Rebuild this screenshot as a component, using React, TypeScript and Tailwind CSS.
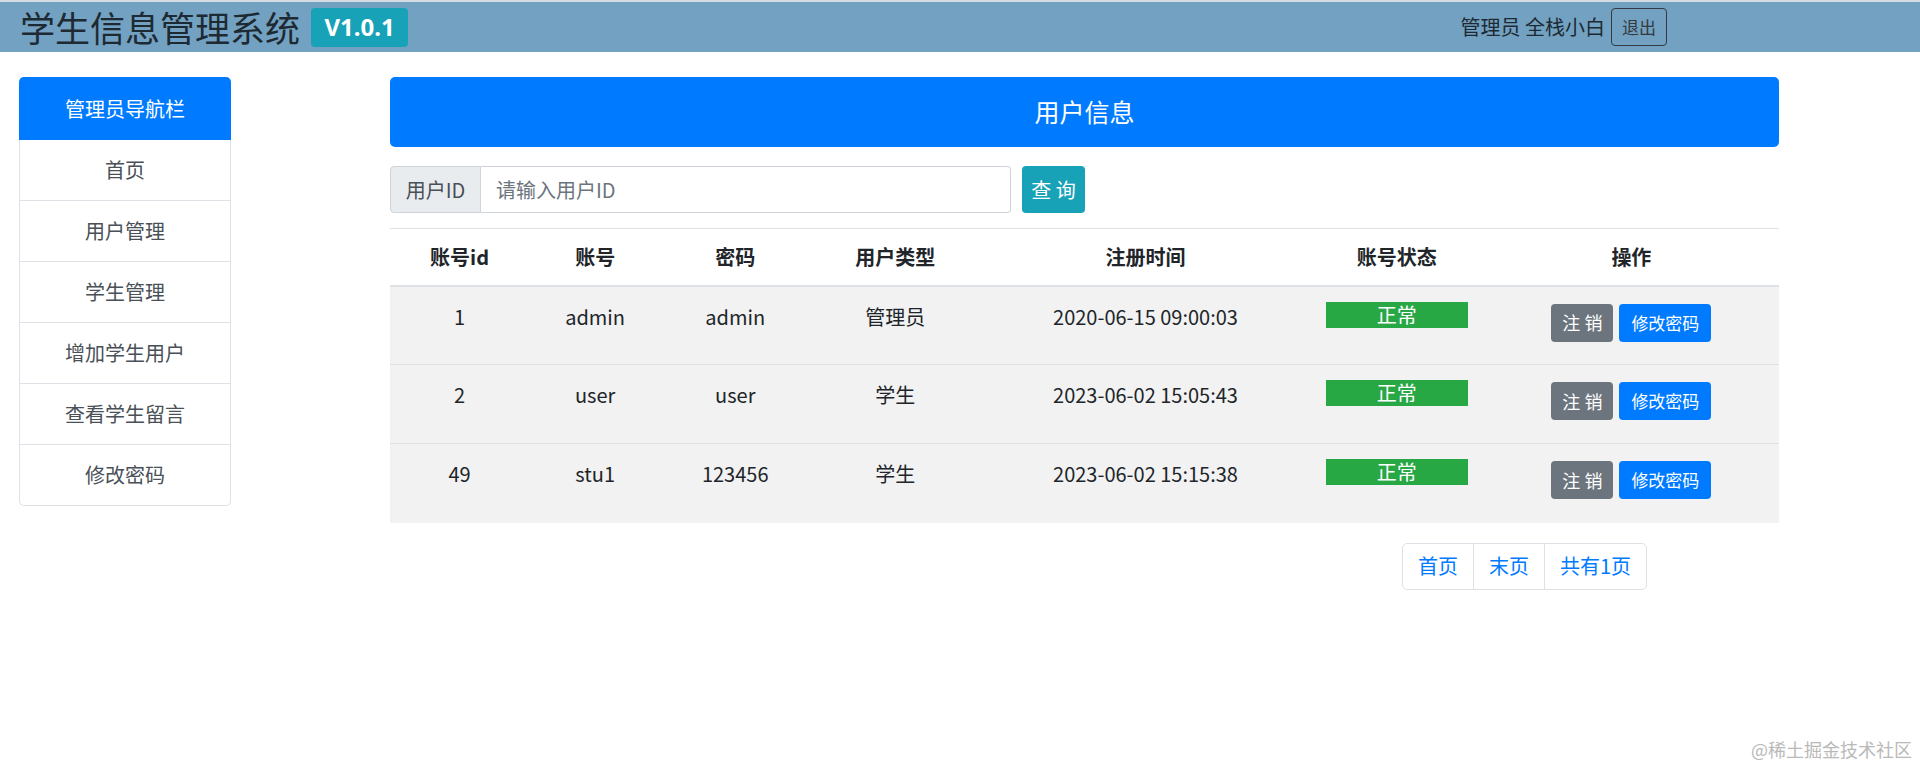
import React from "react";

// 侧边导航
const NAV_ITEMS = ["首页", "用户管理", "学生管理", "增加学生用户", "查看学生留言", "修改密码"];

const USERS = [
  { id: 1, account: "admin", pwd: "admin", type: "管理员", time: "2020-06-15 09:00:03" },
  { id: 2, account: "user", pwd: "user", type: "学生", time: "2023-06-02 15:05:43" },
  { id: 49, account: "stu1", pwd: "123456", type: "学生", time: "2023-06-02 15:15:38" },
];

const COLS = [
  { label: "账号id", w: "w-[139px]" },
  { label: "账号", w: "w-[132px]" },
  { label: "密码", w: "w-[148px]" },
  { label: "用户类型", w: "w-[172px]" },
  { label: "注册时间", w: "w-[328px]" },
  { label: "账号状态", w: "w-[174px]" },
  { label: "操作", w: "w-[295px]" },
];

export default function App() {
  return (
    <div className="relative min-h-[771px] bg-white text-[#212529] font-['Noto_Sans_CJK_SC','Noto_Sans',sans-serif]">
      {/* 顶栏 */}
      <header className="h-[52px] bg-[#72a1c1] border-t-2 border-[#d4dce2] flex items-center pl-[20px] pr-[253px]">
        <div className="flex items-center gap-[11px]">
          <h1 className="text-[35px] leading-[40px] text-[#1e2a33]">学生信息管理系统</h1>
          <span className="h-[39px] w-[97px] flex items-center justify-center rounded-[4px] bg-[#17a2b8] text-white text-[24px] font-bold font-['Noto_Sans',sans-serif]">
            V1.0.1
          </span>
        </div>
        <div className="ml-auto flex items-center gap-[6px]">
          <span className="text-[20px] leading-[30px] text-[#1e2a33]">管理员 全栈小白</span>
          <button className="h-[38px] px-[10px] rounded-[4px] border border-[#343a40] text-[17px] text-[#343a40]">
            退出
          </button>
        </div>
      </header>

      <div className="flex pl-[19px] pt-[25px]">
        {/* 侧边栏 */}
        <aside className="w-[212px] shrink-0">
          <div className="h-[63px] flex items-center justify-center rounded-t-[5px] bg-[#007bff] text-white text-[20px]">
            管理员导航栏
          </div>
          {NAV_ITEMS.map((item, i) => (
            <div
              key={item}
              className={
                "h-[61px] flex items-center justify-center border-x border-b border-[#dee2e6] text-[20px] text-[#495057] " +
                (i === NAV_ITEMS.length - 1 ? "rounded-b-[5px]" : "")
              }
            >
              {item}
            </div>
          ))}
        </aside>

        {/* 主体 */}
        <main className="ml-[159px] w-[1389px]">
          <div className="h-[70px] flex items-center justify-center rounded-[5px] bg-[#007bff] text-white text-[25px]">
            用户信息
          </div>

          {/* 查询 */}
          <div className="mt-[19px] flex items-center h-[47px]">
            <div className="flex h-full w-[621px]">
              <span className="w-[91px] flex items-center justify-center bg-[#e9ecef] border border-[#ced4da] rounded-l-[4px] text-[20px] text-[#495057]">
                用户ID
              </span>
              <input
                className="flex-1 border border-l-0 border-[#ced4da] rounded-r-[4px] px-[15px] text-[20px] text-[#495057] placeholder:text-[#6c757d] outline-none"
                placeholder="请输入用户ID"
              />
            </div>
            <button className="ml-[11px] h-full w-[63px] rounded-[4px] bg-[#17a2b8] text-white text-[20px]">
              查 询
            </button>
          </div>

          {/* 表格 */}
          <table className="mt-[15px] w-full border-collapse text-center text-[20px]">
            <thead>
              <tr className="h-[57px] border-t border-b-2 border-[#dee2e6]">
                {COLS.map((c) => (
                  <th key={c.label} className={c.w + " font-bold text-[#212529]"}>
                    {c.label}
                  </th>
                ))}
              </tr>
            </thead>
            <tbody>
              {USERS.map((u, i) => (
                <tr
                  key={u.id}
                  className={"h-[79px] bg-[#f2f2f2] " + (i < USERS.length - 1 ? "border-b border-[#dee2e6]" : "")}
                >
                  <td className="align-top pt-[15px] leading-[30px]">{u.id}</td>
                  <td className="align-top pt-[15px] leading-[30px]">{u.account}</td>
                  <td className="align-top pt-[15px] leading-[30px]">{u.pwd}</td>
                  <td className="align-top pt-[15px] leading-[30px]">{u.type}</td>
                  <td className="align-top pt-[15px] leading-[30px]">{u.time}</td>
                  <td className="align-top pt-[15px]">
                    <span className="mx-auto w-[142px] h-[26px] flex items-center justify-center bg-[#28a745] text-white text-[20px] leading-[26px]">
                      正常
                    </span>
                  </td>
                  <td className="align-top pt-[17px]">
                    <div className="flex justify-center gap-[6px]">
                      <button className="h-[38px] w-[62px] rounded-[4px] bg-[#6c757d] text-white text-[18px]">
                        注 销
                      </button>
                      <button className="h-[38px] w-[92px] rounded-[4px] bg-[#007bff] text-white text-[17px]">
                        修改密码
                      </button>
                    </div>
                  </td>
                </tr>
              ))}
            </tbody>
          </table>

          {/* 分页 */}
          <div className="mt-[20px] flex justify-end pr-[132px]">
            <div className="flex h-[47px] rounded-[5px] border border-[#dee2e6] text-[20px] text-[#007bff]">
              <a className="px-[15px] flex items-center border-r border-[#dee2e6]">首页</a>
              <a className="px-[15px] flex items-center border-r border-[#dee2e6]">末页</a>
              <a className="px-[15px] flex items-center">共有1页</a>
            </div>
          </div>
        </main>
      </div>

      <span className="absolute right-[8px] bottom-[8px] text-[18px] text-[#b9b9b9]">@稀土掘金技术社区</span>
    </div>
  );
}
